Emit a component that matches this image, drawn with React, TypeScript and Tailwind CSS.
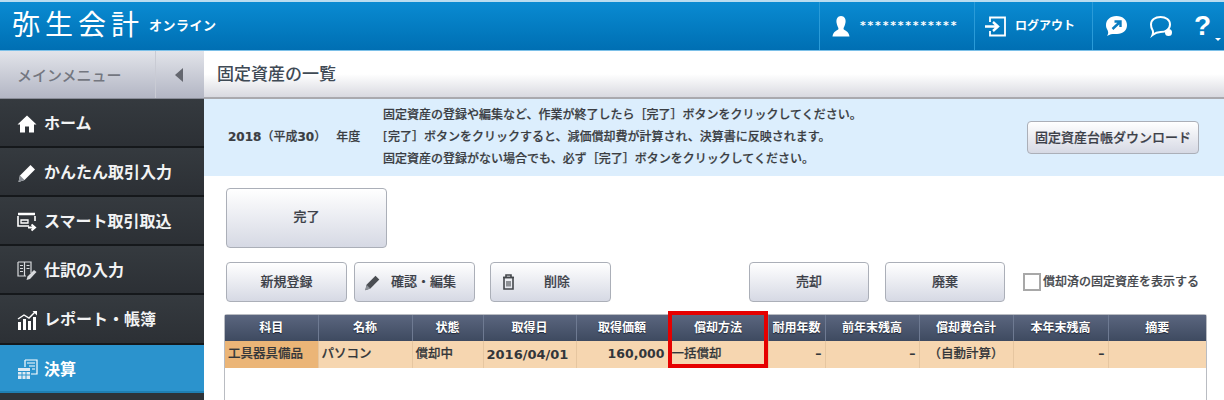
import React from 'react';

const FONT = '"DejaVu Sans", "Noto Sans CJK JP", sans-serif';

const HomeIcon = () => (
  <svg width="20" height="18" viewBox="0 0 20 18" fill="#fff">
    <path d="M10 0.5 L19.5 9.5 L17 9.5 L17 17.5 L12 17.5 L12 11.5 L8 11.5 L8 17.5 L3 17.5 L3 9.5 L0.5 9.5 Z" />
  </svg>
);

const PencilIcon = ({ color = '#fff', size = 20 }: { color?: string; size?: number }) => (
  <svg width={size} height={size} viewBox="0 0 20 20" fill={color}>
    <path d="M13.5 2 L18 6.5 L7.5 17 L1.5 19 L3 12.5 Z" />
    <path d="M3 12.5 L7.5 17 L1.5 19 Z" fill="#8a8f96" />
  </svg>
);

const SmartIcon = () => (
  <svg width="20" height="20" viewBox="0 0 20 20" fill="none" stroke="#fff" strokeWidth="1.6">
    <path d="M1 2 H18" strokeWidth="2.5" />
    <path d="M1 4 V14 H12 M18 4 V9" />
    <path d="M4 8 H11 V11 H4 Z" strokeWidth="1.3" />
    <path d="M11 15.5 H17 M14.5 12.5 L18 15.5 L14.5 18.5" strokeWidth="2" />
  </svg>
);

const JournalIcon = () => (
  <svg width="20" height="20" viewBox="0 0 20 20" fill="none" stroke="#d8dadd" strokeWidth="1.2">
    <path d="M1 1 H14 V12 M1 1 V15 H9" />
    <path d="M7.5 1 V15 M3 4.5 H6 M3 7.5 H6 M3 10.5 H6 M9.5 4.5 H12.5 M9.5 7.5 H12.5" />
    <path d="M17 9 L19.5 11 L13 18 L9.5 19 L10.5 15.5 Z" fill="#d8dadd" stroke="none" />
  </svg>
);

const ReportIcon = () => (
  <svg width="21" height="20" viewBox="0 0 21 20" fill="#fff">
    <rect x="1" y="12" width="3" height="8" />
    <rect x="6" y="9" width="3" height="11" />
    <rect x="11" y="11" width="3" height="9" />
    <rect x="16" y="7" width="3" height="13" />
    <path d="M1 9 L7 5 L12 8 L18 2" fill="none" stroke="#fff" strokeWidth="1.4" />
    <path d="M15.5 1 H20 V5.5 Z" />
  </svg>
);

const ClosingIcon = () => (
  <svg width="21" height="21" viewBox="0 0 21 21" fill="none" stroke="#fff" strokeWidth="1.2">
    <path d="M8 1 H20 V15 H14" />
    <path d="M8 1 V8 M10 4 H18 M12 7 H18 M15 10 H18" />
    <path d="M1 9 H13 V20 H1 Z" fill="#dfeaf3" stroke="none" />
    <path d="M1 12.5 H13 M1 16 H13 M5 12.5 V20 M9 12.5 V20" stroke="#2b93cd" strokeWidth="1" />
  </svg>
);

const menu = [
  { label: 'ホーム', icon: <HomeIcon />, h: 'h-[49px]' },
  { label: 'かんたん取引入力', icon: <PencilIcon />, h: 'h-[49px]' },
  { label: 'スマート取引取込', icon: <SmartIcon />, h: 'h-[49px]' },
  { label: '仕訳の入力', icon: <JournalIcon />, h: 'h-[49px]' },
  { label: 'レポート・帳簿', icon: <ReportIcon />, h: 'h-[50px]' },
];

const columns = [
  { name: '科目', w: 'w-[93px]' },
  { name: '名称', w: 'w-[94px]' },
  { name: '状態', w: 'w-[71px]' },
  { name: '取得日', w: 'w-[93px]' },
  { name: '取得価額', w: 'w-[92px]' },
  { name: '償却方法', w: 'w-[100px]' },
  { name: '耐用年数', w: 'w-[57px]' },
  { name: '前年末残高', w: 'w-[94px]' },
  { name: '償却費合計', w: 'w-[94px]' },
  { name: '本年末残高', w: 'w-[95px]' },
  { name: '摘要', w: 'w-[98px]' },
];

const btn =
  'flex items-center justify-center border border-[#abafb8] rounded-[4px] bg-gradient-to-b from-white to-[#d6d9e4] text-[13px] font-medium text-[#3c4048] [-webkit-text-stroke:0.2px_#3c4048]';

const App: React.FC = () => {
  const base = 'border-r border-[#e6c6a0] h-[27px] px-[3px] text-[#33363a] whitespace-nowrap';
  const cell = `${base} text-[12.5px] font-medium [-webkit-text-stroke:0.2px_#33363a]`;
  const num = `${base} text-[12.5px] font-bold text-right`;

  return (
    <div className="w-[1224px] h-[400px] overflow-hidden flex flex-col bg-white" style={{ fontFamily: FONT }}>
      {/* Top bar */}
      <header className="h-[51px] shrink-0 flex items-stretch border-t-2 border-[#b8dcf0] border-b border-b-[#7cc0e8] bg-gradient-to-b from-[#0a8bd2] to-[#006fb3] text-white">
        <div className="flex items-center pl-[12px]">
          <span className="text-[28px] font-normal tracking-[5px] leading-none">弥生会計</span>
          <span className="ml-[5px] text-[13px] font-bold tracking-[0.5px]">オンライン</span>
        </div>
        <div className="ml-auto flex items-stretch">
          <div className="w-[155px] flex items-center border-l border-[#2a9bd8] pl-[12px]">
            <svg width="18" height="21" viewBox="0 0 18 21" fill="#fff">
              <path d="M9 0 C12.5 0 14 3 13.5 6.5 C13 10 11.5 11.5 11.5 13 C12 14.5 17 15 17.5 20.5 H0.5 C1 15 6 14.5 6.5 13 C6.5 11.5 5 10 4.5 6.5 C4 3 5.5 0 9 0 Z" />
            </svg>
            <span className="ml-[10px] text-[11px] font-bold tracking-[1.8px] pt-[1px]">*************</span>
          </div>
          <div className="w-[118px] flex items-center border-l border-[#2a9bd8] pl-[10px]">
            <svg width="21" height="21" viewBox="0 0 21 21" fill="none" stroke="#fff" strokeWidth="1.8">
              <path d="M5 6 V1.5 H20 V19.5 H5 V15" />
              <path d="M0 10.5 H12 M8 6 L13 10.5 L8 15" strokeWidth="2.4" />
            </svg>
            <span className="ml-[9px] text-[12px] font-bold">ログアウト</span>
          </div>
          <div className="w-[132px] flex items-center border-l border-[#2a9bd8] pl-[12px] relative">
            <svg width="23" height="22" viewBox="0 0 23 22">
              <path d="M11.5 1 C18 1 22 5 22 10 C22 15.5 18 19 12 19 C9 19 6 18.5 2 21 C4 18 3 16.5 2.5 15 C1.5 13.5 1 12 1 10 C1 5 5 1 11.5 1 Z" fill="#fff" />
              <path d="M7.5 14 L15 7 M9.5 6.5 H15.5 V12" fill="none" stroke="#0a7cc0" strokeWidth="2.4" />
            </svg>
            <svg className="ml-[21px]" width="24" height="23" viewBox="0 0 24 23">
              <path d="M11.5 2 C17 2 21 5 21 9.5 C21 14 17 17 11.5 17 C9 17 6 18 3.5 20 C4.5 17.5 4 16 3.5 15 C2.5 13.5 2 11.5 2 9.5 C2 5 6 2 11.5 2 Z" fill="none" stroke="#fff" strokeWidth="2" />
              <circle cx="19.5" cy="17.5" r="3.5" fill="#fff" />
            </svg>
            <span className="ml-[21px] text-[28px] font-bold leading-none" style={{ fontFamily: '"Liberation Sans", sans-serif' }}>?</span>
            <span className="absolute left-[122px] top-[36px] border-x-[3px] border-x-transparent border-t-[3px] border-t-white" />
          </div>
        </div>
      </header>

      <div className="flex flex-1 min-h-0">
        {/* Sidebar */}
        <aside className="w-[204px] shrink-0 flex flex-col bg-[#2e3338]">
          <div className="h-[48px] shrink-0 flex border-b border-[#8a8d98] bg-gradient-to-b from-[#e2e4ea] to-[#b3b6c4]">
            <div className="w-[156px] flex items-center pl-[17px] pt-[3px] border-r border-[#c9cbd4] text-[15px] font-medium text-[#73767f]">
              メインメニュー
            </div>
            <div className="flex-1 flex items-center justify-center pr-[2px]">
              <span className="border-y-[7px] border-y-transparent border-r-[8px] border-r-[#64676f]" />
            </div>
          </div>
          {menu.map(item => (
            <div
              key={item.label}
              className={`${item.h} shrink-0 flex items-center pl-[16px] pt-[2px] border-b-[2px] border-[#15181b] bg-gradient-to-b from-[#353a3f] to-[#2c3035] text-white`}
            >
              <div className="w-[22px] flex justify-center">{item.icon}</div>
              <span className="ml-[6px] text-[16px] font-bold text-[#f2f3f4]">{item.label}</span>
            </div>
          ))}
          <div className="h-[48px] shrink-0 flex items-center pl-[16px] pt-[3px] bg-[#2b93cd] border-b-[2px] border-[#1f7fb3] text-white">
            <div className="w-[22px] flex justify-center"><ClosingIcon /></div>
            <span className="ml-[6px] text-[16px] font-bold">決算</span>
          </div>
        </aside>

        {/* Main */}
        <main className="flex-1 min-w-0 flex flex-col">
          <div className="h-[48px] shrink-0 flex items-center pl-[13px] pt-[2px] border-b-2 border-[#a9a9ae] bg-gradient-to-b from-white via-white to-[#d8d9e0] text-[17px] font-medium text-[#3f4a55]">
            固定資産の一覧
          </div>
          <div className="h-[77px] shrink-0 flex items-center pb-[2px] bg-[#dceefd] text-[#3a3d42]">
            <div className="w-[179px] pl-[24px] text-[12px] font-medium whitespace-nowrap [-webkit-text-stroke:0.2px_#3a3d42]">
              <span className="font-bold">2018</span>（平成<span className="font-bold">30</span>）<span className="ml-[10px]">年度</span>
            </div>
            <div className="text-[12px] font-medium leading-[22px] whitespace-nowrap [-webkit-text-stroke:0.2px_#3a3d42]">
              <p>固定資産の登録や編集など、作業が終了したら［完了］ボタンをクリックしてください。</p>
              <p><span className="inline-block w-[5px]">[</span>完了］ボタンをクリックすると、減価償却費が計算され、決算書に反映されます。</p>
              <p>固定資産の登録がない場合でも、必ず［完了］ボタンをクリックしてください。</p>
            </div>
            <button className={`${btn} ml-auto mr-[25px] mt-[2px] w-[172px] h-[33px] text-[13.3px] whitespace-nowrap`}>
              固定資産台帳ダウンロード
            </button>
          </div>

          <div className="flex-1 min-h-0 pl-[22px] pr-[18px] pt-[12px] flex flex-col">
            <button className={`${btn} w-[161px] h-[60px] shrink-0 pb-[2px]`}>完了</button>

            <div className="mt-[14px] h-[40px] shrink-0 flex items-stretch">
              <button className={`${btn} w-[121px]`}>新規登録</button>
              <button className={`${btn} w-[121px] ml-[7px] pl-[9px] justify-start`}>
                <PencilIcon color="#4a4d52" size={17} />
                <span className="ml-[10px]">確認・編集</span>
              </button>
              <button className={`${btn} w-[121px] ml-[15px] pl-[11px] justify-start`}>
                <svg width="13" height="16" viewBox="0 0 13 16" fill="none" stroke="#44474c" strokeWidth="1.6">
                  <path d="M1 3.5 H12 M4 3 V1 H9 V3" />
                  <path d="M2 3.5 V15 H11 V3.5 Z" />
                  <path d="M4 7 H9 V12.5 H4 Z" fill="#8e9196" stroke="none" />
                </svg>
                <span className="ml-[29px]">削除</span>
              </button>
              <button className={`${btn} w-[120px] ml-[138px]`}>売却</button>
              <button className={`${btn} w-[120px] ml-[16px]`}>廃棄</button>
              <label className="ml-[18px] flex items-center text-[12px] font-medium text-[#44474c] whitespace-nowrap [-webkit-text-stroke:0.2px_#44474c]">
                <span className="w-[18px] h-[18px] border-2 border-[#a8a8a8] bg-white" />
                <span className="ml-[2px]">償却済の固定資産を表示する</span>
              </label>
            </div>

            {/* Asset table */}
            <div className="relative mt-[12px] flex-1 w-[983px] -ml-[2px] border border-[#b9bcc2] border-b-0 rounded-t-[3px]">
              <table className="w-full table-fixed border-collapse">
                <colgroup>
                  {columns.map(c => <col key={c.name} className={c.w} />)}
                </colgroup>
                <thead>
                  <tr className="bg-gradient-to-b from-[#5b667f] to-[#3e4a60]">
                    {columns.map(c => (
                      <th key={c.name} className="h-[26px] border-r border-[#6e7a92] last:border-r-0 text-[12px] font-bold text-white text-center whitespace-nowrap p-0 [text-shadow:0_1px_1px_#1f2533]">
                        {c.name}
                      </th>
                    ))}
                  </tr>
                </thead>
                <tbody>
                  <tr className="bg-[#f6d6b0]">
                    <td className={`${cell} bg-[#ebb577]`}>工具器具備品</td>
                    <td className={cell}>パソコン</td>
                    <td className={cell}>償却中</td>
                    <td className={`${base} text-[13px] font-bold`}>2016/04/01</td>
                    <td className={num}>160,000</td>
                    <td className={cell}>一括償却</td>
                    <td className={num}>–</td>
                    <td className={num}>–</td>
                    <td className={`${cell} text-center`}>（自動計算）</td>
                    <td className={num}>–</td>
                    <td className={`${cell} border-r-0`}></td>
                  </tr>
                </tbody>
              </table>
              {/* highlight */}
              <div className="absolute left-[443px] -top-[4px] w-[100px] h-[57px] border-[4px] border-[#e60000]" />
            </div>
          </div>
        </main>
      </div>
    </div>
  );
};

export default App;
